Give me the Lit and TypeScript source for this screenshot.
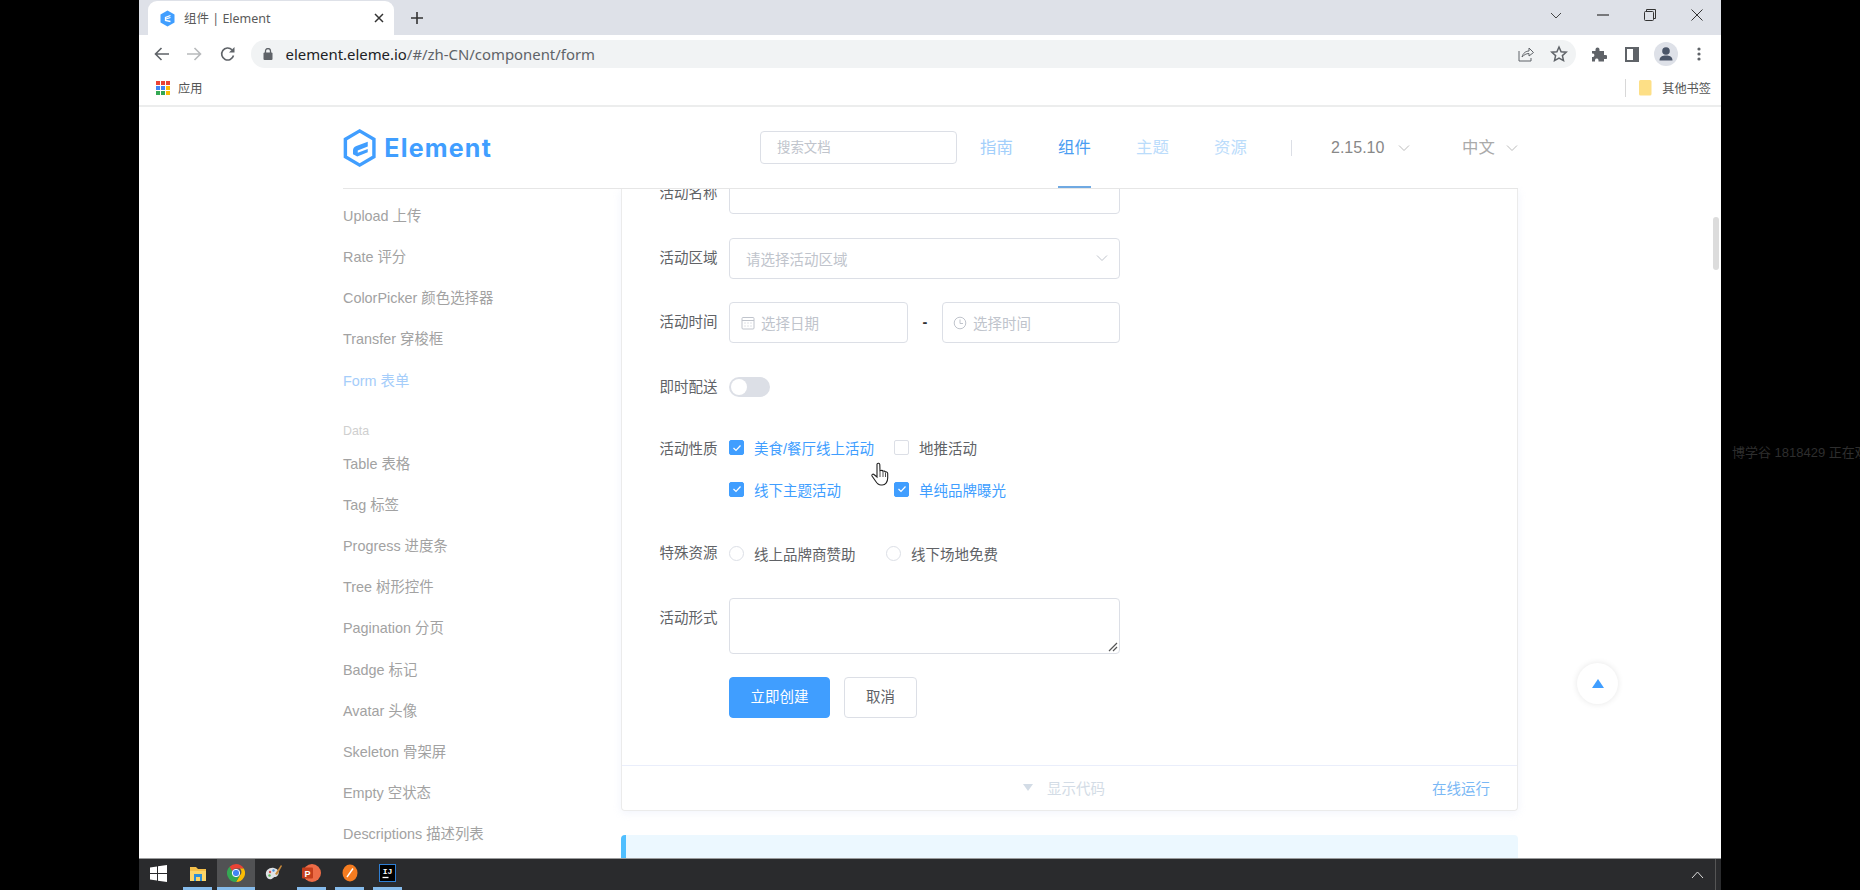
import { LitElement, html, css } from "lit";
import { customElement } from "lit/decorators.js";

const SIDE_TOP = ["Upload 上传", "Rate 评分", "ColorPicker 颜色选择器", "Transfer 穿梭框"];
const SIDE_DATA = [
  "Table 表格",
  "Tag 标签",
  "Progress 进度条",
  "Tree 树形控件",
  "Pagination 分页",
  "Badge 标记",
  "Avatar 头像",
  "Skeleton 骨架屏",
  "Empty 空状态",
  "Descriptions 描述列表",
];

const APP_DOTS = ["#ea4335", "#ea4335", "#ea4335", "#4285f4", "#4285f4", "#fbbc04", "#34a853", "#34a853", "#fbbc04"];

const chevron = html`<svg width="12" height="8" viewBox="0 0 12 8"><path d="M1 1.5l5 5 5-5" fill="none" stroke="currentColor" stroke-width="1"/></svg>`;

@customElement("app-root")
export class AppRoot extends LitElement {
  static styles = css`
    :host {
      display: block;
      width: 1860px;
      height: 890px;
      overflow: hidden;
      background: #000;
      font-family: "Liberation Sans", "Noto Sans CJK SC", sans-serif;
    }
    .desk {
      display: grid;
      grid-template-columns: 139px 1582px 139px;
      height: 890px;
    }
    .watermark {
      padding: 444px 0 0 11px;
      font-size: 13px;
      line-height: 18px;
      color: #2e2e2e;
      white-space: nowrap;
      overflow: hidden;
    }
    .screen {
      position: relative;
      display: flex;
      flex-direction: column;
      height: 890px;
      background: #fff;
      overflow: hidden;
    }

    /* browser chrome */
    .tabstrip {
      display: flex;
      height: 35px;
      background: #dee1e8;
      color: #333;
      flex: none;
    }
    .tab {
      display: flex;
      align-items: center;
      width: 246px;
      height: 34px;
      margin: 1px 0 0 9px;
      background: #fff;
      border-radius: 9px 9px 0 0;
      font-size: 12.5px;
      color: #5a5a5a;
    }
    .tab__fav { margin: 0 9px 0 12px; }
    .tab__title {
      flex: 1;
      margin-top: -2px;
      font-family: "Noto Sans", "Noto Sans CJK SC", sans-serif;
    }
    .tab__close { margin-right: 10px; }
    .plus { margin: 11px 0 0 16px; }
    .winctl { display: flex; margin-left: auto; padding-right: 1px; }
    .winctl span {
      display: flex;
      justify-content: center;
      align-items: center;
      width: 47px;
      height: 30px;
      color: #444;
    }
    .toolbar {
      display: flex;
      align-items: center;
      height: 38px;
      padding: 0 7px;
      flex: none;
      color: #5f6368;
    }
    .tbtn {
      display: flex;
      justify-content: center;
      align-items: center;
      width: 32px;
      height: 32px;
      flex: none;
    }
    .tbtn--reload { margin-left: 2px; margin-right: -2px; }
    .tbtn--r { width: 33px; }
    .tbtn--nudge { transform: translateX(1px); }
    .address {
      display: flex;
      align-items: center;
      flex: 1;
      height: 28px;
      margin: 0 6.5px 0 8.5px;
      padding: 0 8px 0 12px;
      border-radius: 14px;
      background: #f1f3f4;
      font: 14.9px "Noto Sans", sans-serif;
      color: #5f6368;
    }
    .address b { font-weight: 400; color: #202124; }
    .address__lock { margin-right: 13px; }
    .address__url { flex: 1; }
    .address__act { display: flex; gap: 16px; align-items: center; }
    .bookmarks {
      display: flex;
      align-items: center;
      height: 34px;
      padding: 0 10px 2px 17px;
      flex: none;
      border-bottom: 2px solid #eceded;
      box-sizing: border-box;
      font-size: 12.2px;
      color: #555;
    }
    .apps {
      display: grid;
      grid-template-columns: repeat(3, 3.6px);
      gap: 1.6px;
      margin-right: 8px;
    }
    .apps i { display: block; height: 3.6px; }
    .bm-sep { width: 1px; height: 18px; margin-left: auto; background: #d8d8d8; }
    .bm-folder { margin: 0 10px 0 13px; }

    /* page */
    .page {
      position: relative;
      flex: 1;
      min-height: 0;
      overflow: hidden;
      padding: 0 0 0 204px;
    }
    .header {
      position: relative;
      z-index: 1;
      display: flex;
      align-items: center;
      width: 1175px;
      height: 82px;
      box-sizing: border-box;
      border-bottom: 1px solid #e6e6e6;
      background: #fff;
    }
    .logo { display: flex; align-items: center; width: 149px; color: #409eff; }
    .logo__text {
      margin-left: 8px;
      font: 700 25px Inter, sans-serif;
      letter-spacing: 1.2px;
      line-height: 30px;
    }
    .search {
      width: 197px;
      height: 33px;
      margin: 0 23px 0 268px;
      padding-left: 16px;
      box-sizing: border-box;
      border: 1px solid #dcdfe6;
      border-radius: 4px;
      font-size: 13.4px;
      line-height: 31px;
      color: #c0c4cc;
    }
    .nav {
      position: relative;
      width: 33px;
      margin-right: 45px;
      height: 81px;
      font-size: 16.4px;
      line-height: 81px;
      color: #a3cffb;
    }
    .nav--light { color: #bbdcfb; }
    .nav--on { color: #4a9df2; }
    .nav--on::after {
      content: "";
      position: absolute;
      left: 0;
      right: 0;
      bottom: 0;
      height: 2px;
      background: #6fa9e2;
    }
    .hsep { width: 1px; height: 16px; margin: 0 39px 0 -1px; background: #dcdfe6; }
    .drop { display: flex; align-items: center; font-size: 16px; color: #888; }
    .drop--ver { width: 131px; }
    .drop--ver svg { margin-left: 14px; color: #bbb; }
    .drop--lang { margin-top: -3px; font-size: 16.4px; color: #aaa; }
    .drop--lang svg { margin: 3px 0 0 11px; color: #bbb; }

    .body { display: flex; align-items: flex-start; }
    .side { width: 278px; padding-top: 7px; font-size: 14.4px; color: #a2a2a2; }
    .side__item { height: 41.17px; line-height: 41.17px; white-space: nowrap; }
    .side__item--on { color: #a5cdfa; }
    .side__group {
      height: 26px;
      margin-top: 16px;
      line-height: 26px;
      font-size: 12.4px;
      color: #cfcfcf;
    }
    .main { width: 897px; }
    .card {
      border: 1px solid #ebebeb;
      border-top: 0;
      border-radius: 0 0 4px 4px;
      box-shadow: 0 2px 8px rgba(232, 237, 250, 0.6);
      overflow: hidden;
    }
    .form { padding: 0 0 47px 12px; margin-top: -16px; }
    .row {
      display: flex;
      margin-bottom: 23.5px;
      font-size: 14.5px;
      color: #606266;
    }
    .row--tight { margin-bottom: 21.5px; }
    .row--check { margin-bottom: 23px; }
    .row--radio { margin-bottom: 23.5px; }
    .label {
      width: 95px;
      height: 41px;
      padding-right: 11.5px;
      box-sizing: border-box;
      text-align: right;
      line-height: 41px;
      flex: none;
    }
    .input {
      display: flex;
      align-items: center;
      width: 391px;
      height: 41px;
      box-sizing: border-box;
      border: 1px solid #dcdfe6;
      border-radius: 4px;
      color: #c0c4cc;
    }
    .input--select { justify-content: space-between; padding: 0 11px 0 16px; }
    .input--half { width: 179px; padding-left: 11px; }
    .input--half svg { margin-right: 6px; }
    .input--half.time { width: 178px; padding-left: 10px; }
    .dash {
      width: 34px;
      text-align: center;
      line-height: 41px;
      color: #303133;
      font-weight: 700;
    }
    .switch {
      position: relative;
      width: 41px;
      height: 20px;
      margin-top: 10.5px;
      border-radius: 10px;
      background: #dcdfe6;
    }
    .switch::after {
      content: "";
      position: absolute;
      left: 2px;
      top: 2px;
      width: 16px;
      height: 16px;
      border-radius: 50%;
      background: #fff;
    }
    .checks {
      display: grid;
      grid-template-columns: 165px auto;
      grid-auto-rows: 41.5px;
      margin-top: -2px;
    }
    .opt { display: flex; align-items: center; white-space: nowrap; }
    .opt--on { color: #409eff; }
    .box {
      display: flex;
      justify-content: center;
      align-items: center;
      width: 15px;
      height: 15px;
      margin-right: 10px;
      box-sizing: border-box;
      border: 1px solid #dcdfe6;
      border-radius: 2px;
      flex: none;
    }
    .opt--on .box { border-color: #409eff; background: #409eff; }
    .box--radio { border-radius: 50%; }
    .radios { display: flex; }
    .radios .opt { height: 41px; }
    .radios .opt:first-child { width: 157px; }
    .area {
      position: relative;
      width: 391px;
      height: 56px;
      box-sizing: border-box;
      border: 1px solid #dcdfe6;
      border-radius: 4px;
    }
    .area svg { position: absolute; right: 1px; bottom: 1px; }
    .label--area { line-height: 41px; }
    .row--btns { margin: 0 0 0 95px; gap: 14px; }
    .btn {
      height: 41px;
      box-sizing: border-box;
      border: 1px solid #dcdfe6;
      border-radius: 4px;
      font-size: 14.5px;
      line-height: 39px;
      text-align: center;
      color: #606266;
    }
    .btn--primary { width: 101px; border-color: #409eff; background: #409eff; color: #fff; }
    .btn--plain { width: 73px; }
    .foot {
      display: flex;
      align-items: center;
      height: 45px;
      padding: 0 27px 2px 0;
      box-sizing: border-box;
      border-top: 1px solid #eaeefb;
      font-size: 14.5px;
    }
    .foot__toggle { margin-left: 401px; display: flex; align-items: center; color: #d3dce6; }
    .foot__toggle i {
      width: 0;
      height: 0;
      margin-right: 14px;
      border: 5px solid transparent;
      border-top: 7px solid #d3dce6;
      border-bottom: 0;
    }
    .foot__run { margin-left: auto; color: #7ab8f5; }
    .tip {
      height: 60px;
      margin-top: 24px;
      box-sizing: border-box;
      border-left: 5px solid #50bfff;
      border-radius: 4px 4px 0 0;
      background: #ecf8ff;
    }
    .totop {
      position: absolute;
      left: 1438px;
      top: 556px;
      display: flex;
      justify-content: center;
      align-items: center;
      width: 41px;
      height: 41px;
      border-radius: 50%;
      background: #fff;
      box-shadow: 0 0 6px rgba(0, 0, 0, 0.1);
      z-index: 2;
    }
    .totop i {
      width: 0;
      height: 0;
      border: 6.5px solid transparent;
      border-bottom: 9px solid #409eff;
      border-top: 0;
    }
    .scroll {
      position: absolute;
      left: 1574px;
      top: 110px;
      width: 6px;
      height: 53px;
      border-radius: 3px;
      background: #dcdcdc;
      z-index: 2;
    }
    .cursor { position: absolute; left: 731px; top: 355px; z-index: 3; }

    /* taskbar */
    .taskbar {
      display: flex;
      height: 32px;
      flex: none;
      box-sizing: border-box;
      border-top: 1px solid #9a9b9c;
      background: #2a2b2d;
    }
    .task {
      position: relative;
      display: flex;
      justify-content: center;
      align-items: center;
      width: 38px;
      padding-bottom: 3px;
      box-sizing: border-box;
    }
    .task--win { width: 39.5px; }
    .task--open::after {
      content: "";
      position: absolute;
      left: 4.5px;
      right: 4.5px;
      bottom: 0;
      height: 3px;
      background: #86bcec;
    }
    .task--active { background: #515254; }
    .task--active::after { left: 0; right: 0; }
    .tray {
      display: flex;
      align-items: center;
      margin-left: auto;
      padding-right: 5px;
      color: #ddd;
    }
    .tray__line { width: 1px; height: 32px; margin-left: 11px; background: #555; }
  `;

  private _calendar() {
    return html`<svg width="14" height="14" viewBox="0 0 14 14" fill="none" stroke="#c0c4cc"><rect x="1" y="1.5" width="12" height="11.5" rx="1"/><path d="M1 4.5h12M3.5 7h1M6.5 7h1M9.5 7h1M3.5 10h1M6.5 10h1M9.5 10h1"/></svg>`;
  }

  private _clock() {
    return html`<svg width="14" height="14" viewBox="0 0 14 14" fill="none" stroke="#c0c4cc"><circle cx="7" cy="7" r="5.8"/><path d="M7 3.5V7.5H10"/></svg>`;
  }

  private _check() {
    return html`<svg width="10" height="8" viewBox="0 0 10 8"><path d="M1.5 4l2.5 2.5L8.5 1.5" fill="none" stroke="#fff" stroke-width="1.2"/></svg>`;
  }

  private _opt(label: string, on: boolean) {
    return html`<div class="opt ${on ? "opt--on" : ""}"><span class="box">${on ? this._check() : ""}</span>${label}</div>`;
  }

  private _radio(label: string) {
    return html`<div class="opt"><span class="box box--radio"></span>${label}</div>`;
  }

  private _chrome() {
    return html`<div class="tabstrip">
        <div class="tab">
          <svg class="tab__fav" width="15" height="17" viewBox="0 0 15 17">
            <path d="M7.5 0.5L14.5 4.5V12.5L7.5 16.5L0.5 12.5V4.5Z" fill="#409eff"/>
            <path d="M10.5 5.5L5.5 7.5V10.5L10.5 11.5M6 9L10.5 7.5" fill="none" stroke="#fff" stroke-width="1.3"/>
          </svg>
          <span class="tab__title">组件 | Element</span>
          <svg class="tab__close" width="10" height="10" viewBox="0 0 10 10"><path d="M1 1l8 8M9 1l-8 8" stroke="#333" stroke-width="1.5"/></svg>
        </div>
        <svg class="plus" width="14" height="14" viewBox="0 0 14 14"><path d="M7 1v12M1 7h12" stroke="#333" stroke-width="1.6"/></svg>
        <div class="winctl">
          <span><svg width="12" height="7" viewBox="0 0 12 7"><path d="M1 1l5 5 5-5" fill="none" stroke="#444"/></svg></span>
          <span><svg width="12" height="2" viewBox="0 0 12 2"><path d="M0 1h12" stroke="#333" stroke-width="1.2"/></svg></span>
          <span><svg width="12" height="12" viewBox="0 0 12 12" fill="none" stroke="#333"><rect x="0.5" y="2.5" width="9" height="9" rx="1"/><path d="M2.5 2.5V0.5H11.5V9.5H9.5"/></svg></span>
          <span><svg width="12" height="12" viewBox="0 0 12 12"><path d="M0.5 0.5l11 11M11.5 0.5l-11 11" stroke="#333"/></svg></span>
        </div>
      </div>
      <div class="toolbar">
        <div class="tbtn"><svg width="16" height="14" viewBox="0 0 16 14"><path d="M15 7H2M7.5 1L1.5 7l6 6" fill="none" stroke="#5f6368" stroke-width="1.6"/></svg></div>
        <div class="tbtn"><svg width="16" height="14" viewBox="0 0 16 14"><path d="M1 7h13M8.5 1l6 6-6 6" fill="none" stroke="#b8babc" stroke-width="1.6"/></svg></div>
        <div class="tbtn tbtn--reload"><svg width="16" height="16" viewBox="0 0 16 16"><path d="M13.5 9.5A6 6 0 1 1 12 3.8" fill="none" stroke="#5f6368" stroke-width="1.6"/><path d="M14.5 1v5.5H9z" fill="#5f6368"/></svg></div>
        <div class="address">
          <svg class="address__lock" width="10" height="12" viewBox="0 0 10 12"><rect x="0.5" y="4.5" width="9" height="7.5" rx="1" fill="#5f6368"/><path d="M2.5 5V3a2.5 2.5 0 0 1 5 0v2" fill="none" stroke="#5f6368" stroke-width="1.3"/></svg>
          <span class="address__url"><b>element.eleme.io</b>/#/zh-CN/component/form</span>
          <div class="address__act">
            <svg width="16" height="16" viewBox="0 0 16 16" fill="none" stroke="#5f6368"><path d="M1 5v10h12v-3"/><path d="M4 11c1-4 4-6 7-6V2l4.5 4.5L11 10V7.5C8 7.5 6 9 4 11z"/></svg>
            <svg width="18" height="18" viewBox="0 0 18 18"><path d="M9 2l2.1 4.7 5.1.5-3.8 3.4 1.1 5L9 13l-4.500 2.600 1.100-5L1.800 7.200l5.100-.5z" fill="none" stroke="#5f6368" stroke-width="1.5"/></svg>
          </div>
        </div>
        <div class="tbtn tbtn--r"><svg width="16" height="16" viewBox="0 0 16 16"><path d="M1 5h3.500V3.500a2 2 0 0 1 4 0V5H13v4h1.500a2 2 0 0 1 0 4H13v2.500H7.500v-1.500a1.800 1.800 0 0 0-3.500 0v1.500H1V11h1a1.800 1.800 0 0 0 0-3.500H1z" fill="#5f6368"/></svg></div>
        <div class="tbtn tbtn--r"><svg width="14" height="15" viewBox="0 0 14 15"><path d="M0 0h14v15H0z M2 2v11h6V2z" fill="#5f6368" fill-rule="evenodd"/></svg></div>
        <div class="tbtn tbtn--r tbtn--nudge"><svg width="24" height="24" viewBox="0 0 24 24"><circle cx="12" cy="12" r="12" fill="#dee1e8"/><circle cx="12" cy="9" r="3.8" fill="#4a5568"/><path d="M5.500 18.500c0-4 3-5 6.500-5s6.500 1 6.500 5z" fill="#4a5568"/></svg></div>
        <div class="tbtn tbtn--r tbtn--nudge"><svg width="4" height="14" viewBox="0 0 4 14" fill="#5f6368"><circle cx="2" cy="2" r="1.6"/><circle cx="2" cy="7" r="1.6"/><circle cx="2" cy="12" r="1.6"/></svg></div>
      </div>
      <div class="bookmarks">
        <div class="apps">${APP_DOTS.map(c => html`<i style="background:${c}"></i>`)}</div>
        <span>应用</span>
        <div class="bm-sep"></div>
        <svg class="bm-folder" width="13" height="16" viewBox="0 0 13 16"><path d="M1.500 0H11a1.500 1.500 0 0 1 1.500 1.500V14A1.500 1.500 0 0 1 11 15.500H1.500A1.500 1.500 0 0 1 0 14V1.500A1.500 1.500 0 0 1 1.500 0z" fill="#fddf86"/></svg>
        <span>其他书签</span>
      </div>`;
  }

  private _header() {
    return html`<div class="header">
      <div class="logo">
        <svg width="35" height="40" viewBox="0 0 35 40">
          <path d="M17.500 2L32.500 10.700V29.300L17.500 38L2.500 29.300V10.700Z" fill="none" stroke="#409eff" stroke-width="3.6"/>
          <path d="M26 13.500L14 18Q10.500 19.500 10.500 22.500V26.500L15 29L26 24.500V21L15.500 25V22.500L26 18.500Z" fill="#409eff"/>
        </svg>
        <span class="logo__text">Element</span>
      </div>
      <div class="search">搜索文档</div>
      <div class="nav">指南</div>
      <div class="nav nav--on">组件</div>
      <div class="nav nav--light">主题</div>
      <div class="nav nav--light">资源</div>
      <div class="hsep"></div>
      <div class="drop drop--ver">2.15.10${chevron}</div>
      <div class="drop drop--lang">中文${chevron}</div>
    </div>`;
  }

  private _form() {
    return html`<div class="form">
      <div class="row"><div class="label">活动名称</div><div class="input"></div></div>
      <div class="row">
        <div class="label">活动区域</div>
        <div class="input input--select">请选择活动区域<svg width="12" height="8" viewBox="0 0 12 8"><path d="M1 1.5l5 5 5-5" fill="none" stroke="#c0c4cc"/></svg></div>
      </div>
      <div class="row">
        <div class="label">活动时间</div>
        <div class="input input--half">${this._calendar()}选择日期</div>
        <div class="dash">-</div>
        <div class="input input--half time">${this._clock()}选择时间</div>
      </div>
      <div class="row row--tight"><div class="label">即时配送</div><div class="switch"></div></div>
      <div class="row row--check">
        <div class="label">活动性质</div>
        <div class="checks">
          ${this._opt("美食/餐厅线上活动", true)}
          ${this._opt("地推活动", false)}
          ${this._opt("线下主题活动", true)}
          ${this._opt("单纯品牌曝光", true)}
        </div>
      </div>
      <div class="row row--radio">
        <div class="label">特殊资源</div>
        <div class="radios">${this._radio("线上品牌商赞助")}${this._radio("线下场地免费")}</div>
      </div>
      <div class="row">
        <div class="label label--area">活动形式</div>
        <div class="area"><svg width="11" height="11" viewBox="0 0 11 11"><path d="M10 2L2 10M10 6L6 10" stroke="#555" stroke-width="1.2"/></svg></div>
      </div>
      <div class="row row--btns">
        <div class="btn btn--primary">立即创建</div>
        <div class="btn btn--plain">取消</div>
      </div>
    </div>`;
  }

  private _taskbar() {
    return html`<div class="taskbar">
      <div class="task task--win">
        <svg width="17" height="17" viewBox="0 0 17 17" fill="#fff"><path d="M0 2.500L7 1.500V8H0zM8 1.300L17 0V8H8zM0 9H7V15.500L0 14.500zM8 9H17V17L8 15.700z"/></svg>
      </div>
      <div class="task task--open">
        <svg width="16" height="15" viewBox="0 0 16 15"><path d="M0 1h6l2 2h8v12H0z" fill="#f5c04a"/><path d="M0 5h16v10H0z" fill="#fbd669"/><path d="M4 8h8v7h-2v-4H6v4H4z" fill="#2d8fd8"/></svg>
      </div>
      <div class="task task--open task--active">
        <svg width="18" height="18" viewBox="0 0 18 18">
          <path d="M9 0a9 9 0 0 1 7.800 4.500H9a4.500 4.500 0 0 0-4.200 2.900L2.600 2.700A9 9 0 0 1 9 0z" fill="#ea4335"/>
          <path d="M16.800 4.500A9 9 0 0 1 9 18l3.900-6.700a4.500 4.500 0 0 0 0-6.800z" fill="#fbbc04"/>
          <path d="M9 18A9 9 0 0 1 2.600 2.700l3.900 6.600A4.500 4.500 0 0 0 12.900 11.300z" fill="#34a853"/>
          <circle cx="9" cy="9" r="3.7" fill="#4285f4" stroke="#fff" stroke-width="1"/>
        </svg>
      </div>
      <div class="task">
        <svg width="18" height="18" viewBox="0 0 18 18">
          <path d="M1 11C0 6 5 3 9 4s6 4 4 7-3 1-5 3-6 2-7-3z" fill="#dfe3e6"/>
          <circle cx="5" cy="8" r="1.2" fill="#d9534f"/><circle cx="8.5" cy="6.5" r="1.2" fill="#4a90d9"/><circle cx="4.5" cy="11.5" r="1.2" fill="#5cb85c"/>
          <path d="M10 10L16 1l1 1-5 9z" fill="#c98a3c"/>
        </svg>
      </div>
      <div class="task task--open">
        <svg width="19" height="18" viewBox="0 0 19 18">
          <circle cx="10" cy="9" r="9" fill="#ed6c47"/>
          <rect x="0" y="3.5" width="11" height="11" rx="1" fill="#c43e1c"/>
          <text x="5.5" y="12.500" font-size="9" font-weight="700" text-anchor="middle" fill="#fff" font-family="Liberation Sans">P</text>
        </svg>
      </div>
      <div class="task task--open">
        <svg width="16" height="18" viewBox="0 0 16 18"><ellipse cx="8" cy="9" rx="7.5" ry="8.5" fill="#f57c20"/><path d="M5 13L11 4.500" stroke="#fff" stroke-width="1.4"/></svg>
      </div>
      <div class="task task--open">
        <svg width="17" height="18" viewBox="0 0 17 18">
          <rect x="0.5" y="0.5" width="16" height="17" fill="#000" stroke="#2f7fd4"/>
          <text x="8.5" y="9.500" font-size="8" font-weight="700" text-anchor="middle" fill="#fff" font-family="Liberation Mono">IJ</text>
          <path d="M3.500 13.500H9.500" stroke="#fff" stroke-width="1.3"/>
        </svg>
      </div>
      <div class="tray">
        <svg width="13" height="8" viewBox="0 0 13 8"><path d="M1 7l5.500-6L12 7" fill="none" stroke="#ddd"/></svg>
        <div class="tray__line"></div>
      </div>
    </div>`;
  }

  render() {
    return html`<div class="desk">
      <div></div>
      <div class="screen">
        ${this._chrome()}
        <div class="page">
          ${this._header()}
          <div class="body">
            <div class="side">
              ${SIDE_TOP.map(s => html`<div class="side__item">${s}</div>`)}
              <div class="side__item side__item--on">Form 表单</div>
              <div class="side__group">Data</div>
              ${SIDE_DATA.map(s => html`<div class="side__item">${s}</div>`)}
            </div>
            <div class="main">
              <div class="card">
                ${this._form()}
                <div class="foot">
                  <div class="foot__toggle"><i></i>显示代码</div>
                  <div class="foot__run">在线运行</div>
                </div>
              </div>
              <div class="tip"></div>
            </div>
          </div>
          <div class="scroll"></div>
          <div class="totop"><i></i></div>
          <svg class="cursor" width="22" height="25" viewBox="0 0 22 25">
            <path d="M7 2c1-1.200 2.500-1 2.800.500L10 9l1-.5c1-.3 1.800.2 2 .8 1-.5 2-.2 2.400.7 1-.4 2.300.2 2.300 1.500V16c0 3.500-2 7-5.500 7H11c-2.500 0-4-1.500-5.500-4L2 14c-.7-1.300 1-2.500 2-1.500L7 15z" fill="#fff" stroke="#222" stroke-width="1.1"/>
            <path d="M10 10v5M13 10v5M15.500 11v4" stroke="#222" stroke-width="0.8"/>
          </svg>
        </div>
        ${this._taskbar()}
      </div>
      <div class="watermark">博学谷 1818429 正在观看</div>
    </div>`;
  }
}

declare global {
  interface HTMLElementTagNameMap {
    "app-root": AppRoot;
  }
}
